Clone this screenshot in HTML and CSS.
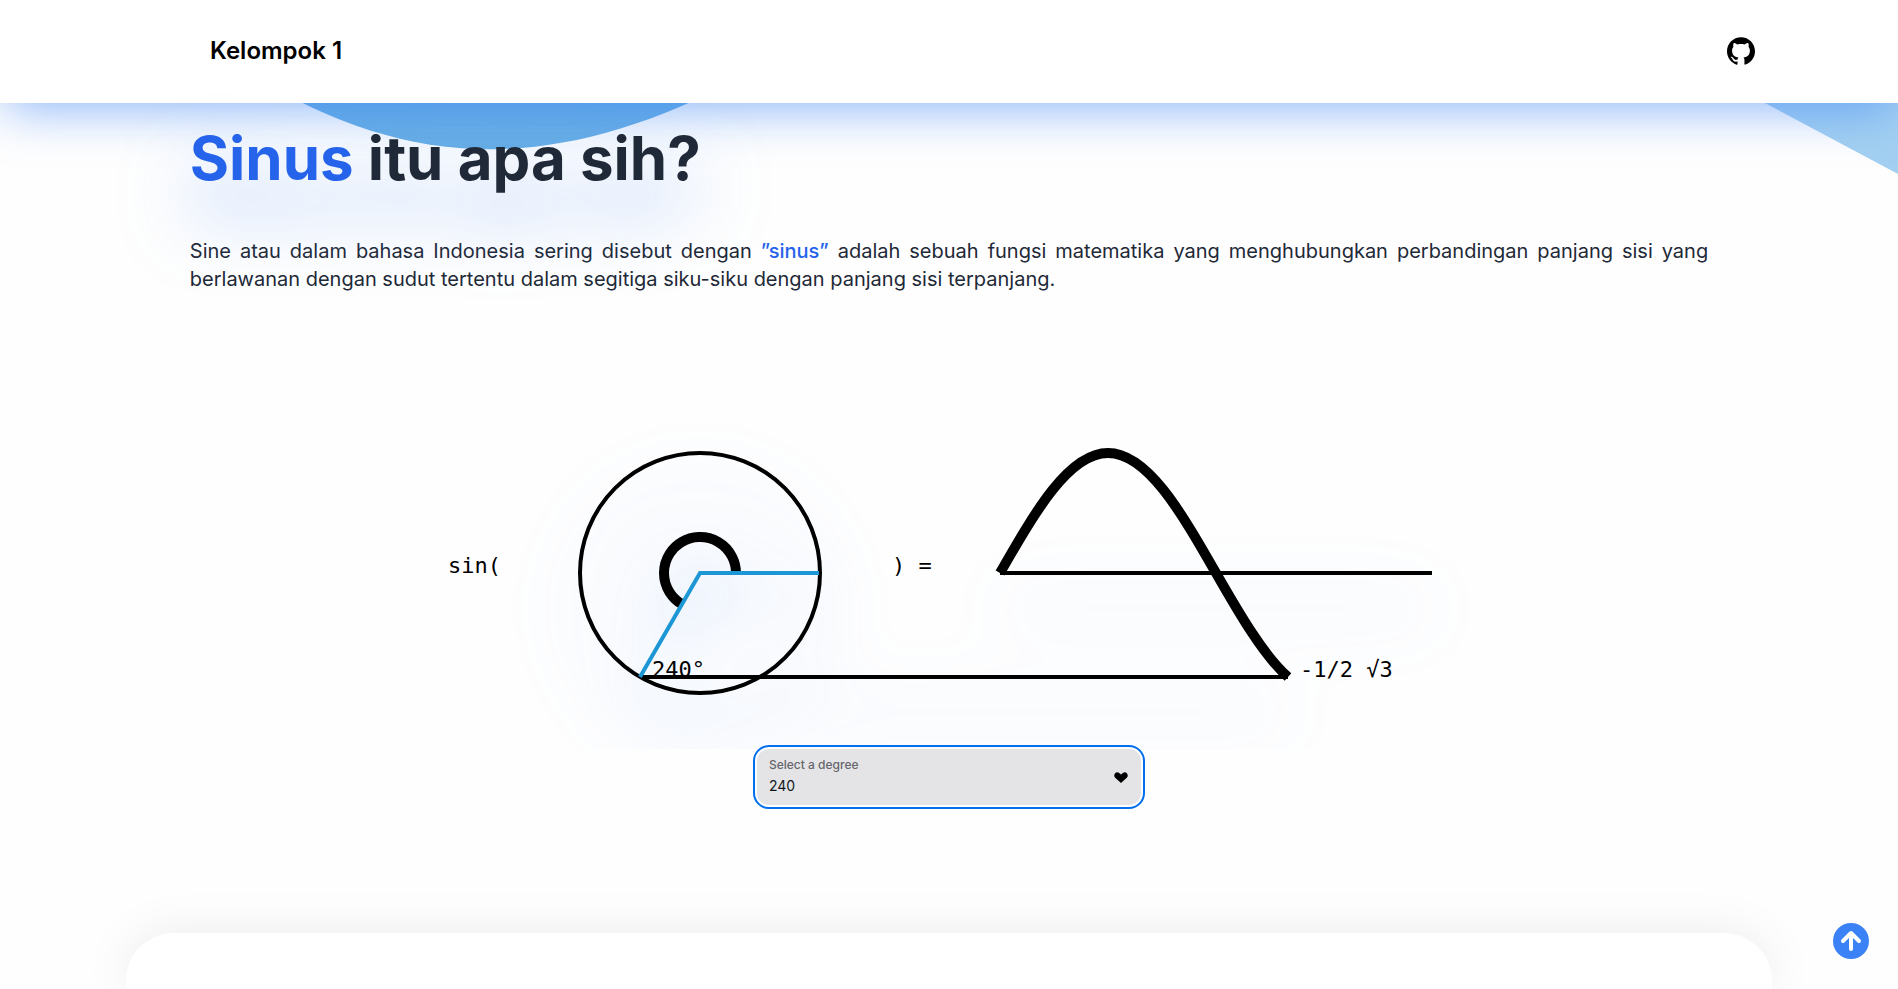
FILE: index.html
```html
<!DOCTYPE html>
<html lang="id">
<head>
<meta charset="utf-8">
<meta name="viewport" content="width=device-width, initial-scale=1">
<title>Kelompok 1</title>
<link rel="stylesheet" href="styles.css">
</head>
<body class="page">
  <svg class="backdrop" viewBox="0 0 1898 180" preserveAspectRatio="none" aria-hidden="true">
    <path fill="#6ab0e6" d="M246 71C396 166 545 182 742 77V0H246Z"/>
    <path fill="#a3d0f1" d="M1690 63L1898 174V0H1690Z"/>
  </svg>

  <header class="navbar">
    <a class="brand" href="#">Kelompok 1</a>
    <a class="repo" href="#" aria-label="GitHub">
      <svg viewBox="0 0 24 24" aria-hidden="true"><path fill="currentColor" d="M12 .297c-6.63 0-12 5.373-12 12 0 5.303 3.438 9.8 8.205 11.385.6.113.82-.258.82-.577 0-.285-.01-1.04-.015-2.04-3.338.724-4.042-1.61-4.042-1.61C4.422 18.07 3.633 17.7 3.633 17.7c-1.087-.744.084-.729.084-.729 1.205.084 1.838 1.236 1.838 1.236 1.07 1.835 2.809 1.305 3.495.998.108-.776.417-1.305.76-1.605-2.665-.3-5.466-1.332-5.466-5.93 0-1.31.465-2.38 1.235-3.22-.135-.303-.54-1.523.105-3.176 0 0 1.005-.322 3.3 1.23.96-.267 1.98-.399 3-.405 1.02.006 2.04.138 3 .405 2.28-1.552 3.285-1.23 3.285-1.23.645 1.653.24 2.873.12 3.176.765.84 1.23 1.91 1.23 3.22 0 4.61-2.805 5.625-5.475 5.92.42.36.81 1.096.81 2.22 0 1.606-.015 2.896-.015 3.286 0 .315.21.69.825.57C20.565 22.092 24 17.592 24 12.297c0-6.627-5.373-12-12-12"/></svg>
    </a>
  </header>

  <main class="content">
    <h1 class="title"><span class="accent">Sinus</span> itu apa sih?</h1>
    <p class="lead">Sine atau dalam bahasa Indonesia sering disebut dengan <span class="quote">”sinus”</span> adalah sebuah fungsi matematika yang menghubungkan perbandingan panjang sisi yang berlawanan dengan sudut tertentu dalam segitiga siku-siku dengan panjang sisi terpanjang.</p>

    <div class="stage">
      <svg class="graph" viewBox="0 0 1000 326" role="img" aria-label="sin(240°) = -1/2 √3">
        <g class="graph-glow" fill="none" stroke="#000" stroke-width="4">
          <circle cx="251" cy="150" r="120"/>
          <path d="M551 150H983"/>
          <path d="M191 254H839"/>
          <path stroke-width="10" d="M287 150A36 36 0 1 0 233 181.200"/>
          <path stroke="#1c96d4" d="M370 150H251L191 254"/>
        </g>
        <path fill="none" stroke="#000" stroke-width="10" d="M551 150C586.200 88.500 619.900 30 659 30S731.800 88.500 767 150C791 191.900 815 233 839 254"/>
        <g class="graph-text">
          <text x="-1" y="150">sin(</text>
          <text x="443" y="150">) =</text>
          <text x="203" y="254">240°</text>
          <text x="851" y="254">-1/2 √3</text>
        </g>
      </svg>
    </div>

    <div class="field">
      <label class="field-label" for="degree">Select a degree</label>
      <select class="field-select" id="degree">
        <option>0</option>
        <option>90</option>
        <option>180</option>
        <option selected>240</option>
        <option>360</option>
      </select>
      <svg class="field-icon" viewBox="0 0 14 11" aria-hidden="true"><path fill="#000" d="M7 11L1.200 5.800C-1.500 2.600 2.200-1.600 5.200 1L7 2.600L8.800 1C11.800-1.600 15.500 2.600 12.800 5.800Z"/></svg>
    </div>

    <section class="card"></section>
  </main>

  <button class="to-top" type="button" aria-label="Kembali ke atas">
    <svg viewBox="0 0 36 36" aria-hidden="true"><path fill="none" stroke="#fff" stroke-width="4" stroke-linecap="round" stroke-linejoin="round" d="M18 26V10M10 18L18 10L26 18"/></svg>
  </button>
</body>
</html>
```
FILE: styles.css
```css
* {
  box-sizing: border-box;
}

.page {
  margin: 0;
  height: 100vh;
  overflow: hidden;
  display: flex;
  flex-direction: column;
  background: #fefefe;
  color: #1f2937;
  font-family: Inter, "Open Sans", sans-serif;
}

.backdrop {
  position: absolute;
  top: 0;
  left: 0;
  width: 100%;
  height: 180px;
  z-index: -1;
}

.navbar {
  display: flex;
  align-items: center;
  justify-content: space-between;
  padding: 36px 143px 38px 210px;
  background: #fff;
  box-shadow: 0 10px 50px -5px rgb(59 130 246 / 0.6);
}

.brand {
  color: #000;
  font-size: 24px;
  font-weight: 600;
  line-height: 29px;
  text-decoration: none;
}

.repo {
  color: #000;
  height: 28px;
}

.repo svg {
  width: 28px;
  height: 28px;
}

.content {
  flex: 1;
  display: flex;
  flex-direction: column;
  width: 80%;
  margin: 0 auto;
}

.title {
  align-self: flex-start;
  margin: 25px 0 49px;
  font-size: 60px;
  line-height: 60px;
  font-weight: 700;
  filter: drop-shadow(0 35px 35px rgb(59 130 246 / 0.5));
}

.accent {
  color: #2563eb;
}

.lead {
  margin: 0;
  font-size: 20px;
  line-height: 28px;
  text-align: justify;
}

.quote {
  color: #2563eb;
  font-weight: 500;
}

.stage {
  display: flex;
  justify-content: center;
  padding-top: 130px;
  overflow: hidden;
}

.graph {
  width: 1000px;
  max-width: 100%;
  overflow: visible;
}

.graph-glow {
  filter: drop-shadow(0 35px 35px rgb(59 130 246 / 0.4));
}

.graph-text {
  font-family: "DejaVu Sans Mono", monospace;
  font-size: 22px;
  fill: #000;
}

.field {
  position: relative;
  flex: none;
  align-self: center;
  width: 384px;
  max-width: 100%;
}

.field-label {
  position: absolute;
  top: 8px;
  left: 12px;
  font-size: 12px;
  line-height: 16px;
  font-weight: 500;
  color: #66666d;
  pointer-events: none;
}

.field-select {
  display: block;
  width: 100%;
  height: 56px;
  padding: 16px 40px 0 12px;
  border: 0;
  border-radius: 12px;
  appearance: none;
  background: #e4e4e6;
  outline: 2px solid #006fee;
  outline-offset: 2px;
  color: #11181c;
  font-family: inherit;
  font-size: 14px;
}

.field-icon {
  position: absolute;
  top: 23px;
  right: 13px;
  width: 14px;
  height: 11px;
  pointer-events: none;
}

.card {
  flex: 1;
  margin: 128px -64px 0;
  border-radius: 48px 48px 0 0;
  background: #fff;
  box-shadow: 0 0 50px rgb(0 0 0 / 0.08);
}

.to-top {
  position: fixed;
  right: 29px;
  bottom: 30px;
  width: 36px;
  height: 36px;
  padding: 0;
  border: 0;
  border-radius: 50%;
  background: #3b82f6;
}

.to-top svg {
  display: block;
}
```
